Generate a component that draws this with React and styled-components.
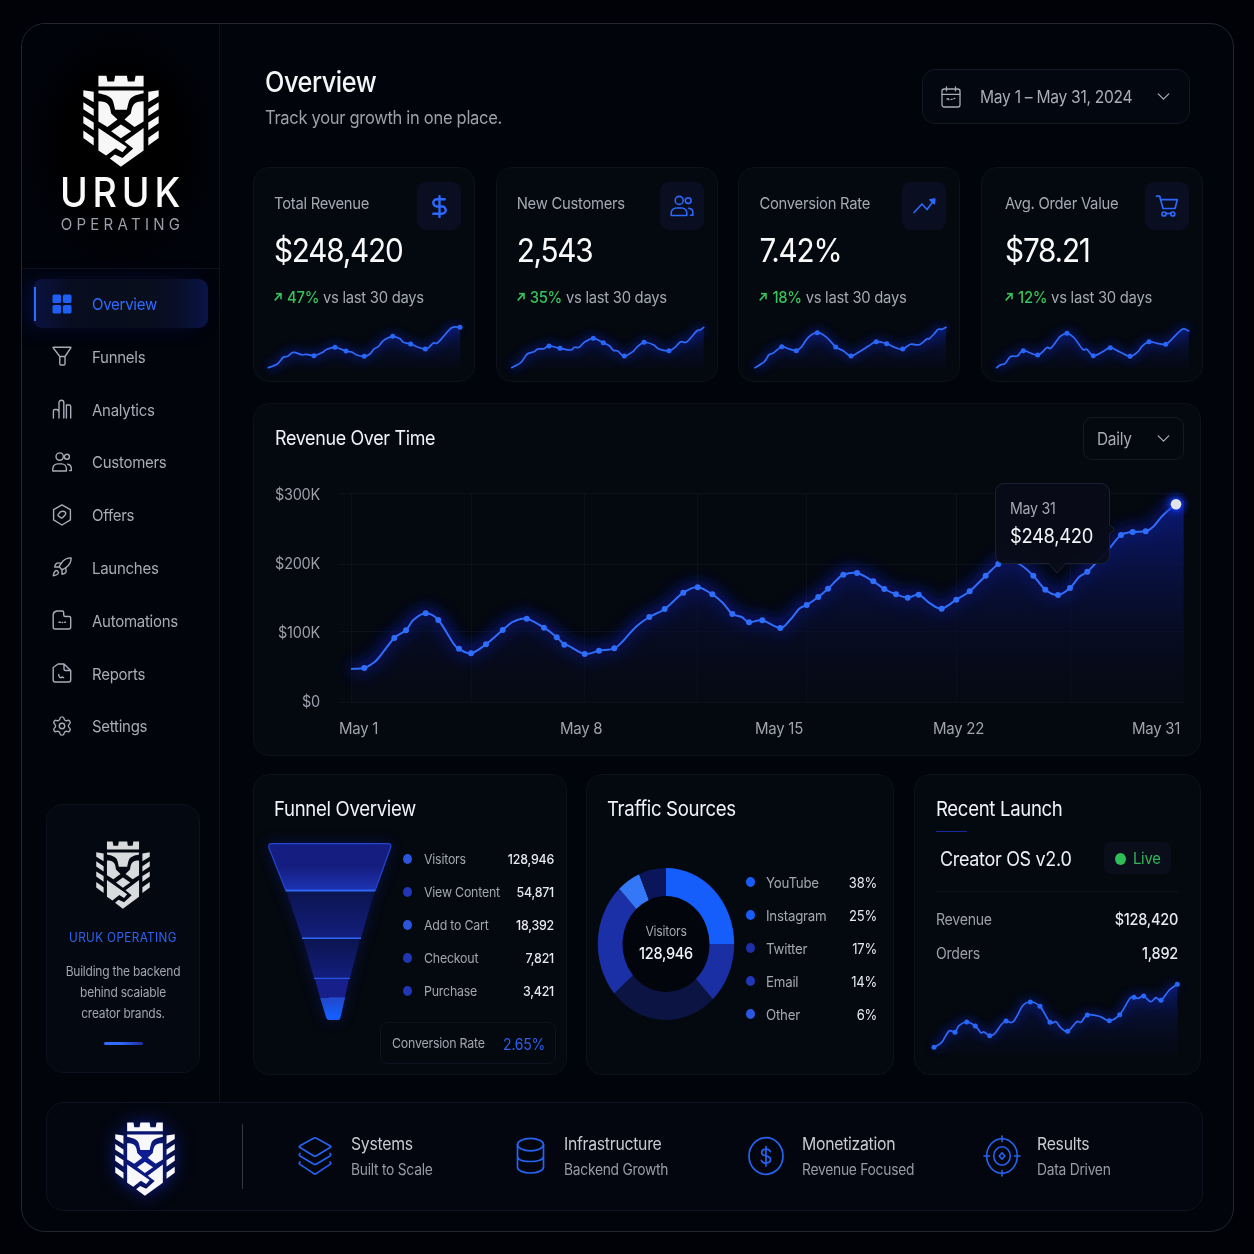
import styled, { createGlobalStyle, css } from "styled-components";
import { ChevronDown, DollarSign, Rocket, Settings } from "lucide-react";

const navItems = [
  { label: "Overview", icon: GridIcon, active: true },
  { label: "Funnels", icon: FunnelIcon },
  { label: "Analytics", icon: BarsIcon },
  { label: "Customers", icon: UsersIcon },
  { label: "Offers", icon: HexIcon },
  { label: "Launches", icon: RocketIcon },
  { label: "Automations", icon: FolderIcon },
  { label: "Reports", icon: FileIcon },
  { label: "Settings", icon: GearIcon },
];

// Points are [x, y] or [x, y, 1] when the point carries a dot.
const stats = [
  {
    label: "Total Revenue",
    value: "$248,420",
    change: "47%",
    icon: DollarIcon,
    inset: 20,
    points: [
      [14.3, 48.7], [23.3, 45], [29.3, 38.3], [33.7, 37.3], [39.3, 33.3],
      [47.7, 35.7], [52.7, 35.3], [60, 36.7, 1], [68.7, 33.3], [72, 30.7],
      [81, 28.3, 1], [92, 32, 1], [97.7, 33], [102.7, 36], [110.3, 37.3, 1],
      [116, 35], [120, 30], [124.3, 27.7], [127.7, 23.3], [131.7, 20],
      [138.7, 17.3, 1], [146, 19.7], [149.3, 23.3], [156.7, 25, 1],
      [162.7, 27.7], [171.3, 30, 1], [175, 28.3], [179.3, 24], [183.3, 24],
      [189.3, 17.7], [197.7, 8.7], [206, 8.3, 1],
    ],
  },
  {
    label: "New Customers",
    value: "2,543",
    change: "35%",
    icon: TeamIcon,
    inset: 20,
    points: [
      [14.7, 48.7], [24, 43.3], [30.3, 35], [37, 32.7], [40.7, 30], [47, 29.7],
      [52, 27, 1], [63, 29.3, 1], [74, 31], [77.3, 28.3], [82.3, 28.3],
      [87.3, 23.3], [96.3, 19.3, 1], [106.3, 23.7, 1], [112.3, 26.7],
      [116.3, 31.3], [120.7, 32], [127.3, 37, 1], [136.3, 32.3],
      [139.7, 28.3], [147, 23.3, 1], [156.3, 25.7], [162, 30],
      [172, 31.7, 1], [178, 28.3], [183.7, 22.7], [189.7, 23], [199.7, 12],
      [203, 11], [206.7, 8.3],
    ],
  },
  {
    label: "Conversion Rate",
    value: "7.42%",
    change: "18%",
    icon: TrendIcon,
    inset: 20,
    points: [
      [16, 48.7], [25.3, 42.7], [30, 35.7], [34.3, 34], [42.7, 27.7, 1],
      [49.3, 29.7], [57.3, 31.7, 1], [62.7, 27.7], [69.3, 18.3],
      [78.3, 13.7, 1], [87.7, 18.3], [96.7, 28, 1], [104.3, 31.7],
      [112, 37, 1], [122, 31.7], [130, 26.7], [137.3, 22.7, 1],
      [147.7, 24.7, 1], [156.7, 28.7], [163.7, 30, 1], [171.7, 25.3],
      [180.3, 25.7], [187.7, 20], [190.3, 19.7], [195, 15], [199.3, 10.3],
      [202.7, 10.3], [207, 8.3],
    ],
  },
  {
    label: "Avg. Order Value",
    value: "$78.21",
    change: "12%",
    icon: CartIcon,
    inset: 23,
    points: [
      [14.7, 48.7], [18.7, 45.7], [23, 44.7], [28.3, 37.7], [35.3, 37],
      [41.3, 31.7, 1], [55.7, 36, 1], [64.7, 28.7], [69, 29], [78, 17.7],
      [85, 14.3, 1], [92.3, 19], [100.7, 30.3], [104.7, 30.3],
      [111.3, 36.7, 1], [120.7, 32.7], [128.3, 28.7, 1], [138, 33],
      [148, 37.3, 1], [156.3, 32.3], [159.7, 27.7], [167, 22.7, 1],
      [175.3, 24.3], [183.7, 25.3, 1], [189.7, 20.3], [200.3, 10.3],
      [206.7, 12],
    ],
  },
];

const revenuePoints = [
  [12, 189], [25.3, 188, 1], [32.7, 184], [38.7, 179], [55.3, 158, 1],
  [67, 150.3, 1], [74.3, 140], [86.7, 133.3, 1], [99.3, 140, 1],
  [114.3, 163.3], [120, 168.7, 1], [132, 173.3, 1], [147, 164.3, 1],
  [163.7, 150, 1], [174.3, 141.7], [187.7, 138.7, 1], [205, 147.7, 1],
  [217.7, 157.3, 1], [225.3, 164.7, 1], [229.3, 165.7], [245.7, 174, 1],
  [260, 170.7, 1], [275.3, 168.3, 1], [284.3, 160.7], [297, 146.7],
  [310.3, 137, 1], [325.7, 129, 1], [344.3, 112.7, 1], [358.7, 107.3, 1],
  [373.3, 114.3, 1], [383.7, 122.7], [393.3, 134, 1], [402.7, 137],
  [410, 142.3, 1], [423.3, 140.3, 1], [441.3, 148, 1], [451, 140],
  [460.3, 128.7], [467.7, 125, 1], [479.3, 117, 1], [489, 108.7, 1],
  [497.7, 100], [504.3, 94.7, 1], [518, 93, 1], [534.3, 101.3, 1],
  [545.3, 109, 1], [557, 114.3, 1], [568.7, 117.7, 1], [579.7, 114.7, 1],
  [591, 123.3], [602.7, 128.7, 1], [617.3, 119.7, 1], [630.7, 111.3, 1],
  [646.7, 95.7, 1], [659.3, 84, 1], [668, 80.7], [680.3, 84],
  [694.3, 95.7, 1], [706.3, 109.7, 1], [719, 115, 1], [731, 108, 1],
  [740, 97], [748.3, 91.7, 1], [756.7, 83.3], [764.3, 76], [771, 67.7],
  [782, 55, 1], [793.7, 52, 1], [806.7, 51.3, 1], [814.3, 46.7],
  [822, 37.3], [827.7, 31.7], [837, 24.3],
];

const launchPoints = [
  [19, 72.3, 1], [26.7, 67.3], [34, 56], [40, 57.3, 1], [44, 50.7],
  [51.7, 47, 1], [60.3, 51, 1], [66, 57.7], [69, 57], [74.7, 60.7, 1],
  [80, 58.3], [86, 50], [91, 46, 1], [98.3, 46.7], [107.7, 30.7],
  [115.3, 27, 1], [125, 31.3, 1], [135, 47.3, 1], [141, 46.7],
  [145.7, 52.7], [152.7, 56.3, 1], [161.7, 46.7], [166, 47.3],
  [172.3, 40, 1], [184.3, 41.3], [194.3, 45.7, 1], [204.7, 39.7, 1],
  [215, 23.3], [219, 22.3, 1], [223.3, 23.3], [228.7, 21, 1],
  [235.7, 26.7], [241, 22.7], [246, 25.3, 1], [254.3, 15],
  [262.3, 9.3, 1],
];

const funnelRows = [
  { label: "Visitors", value: "128,946", color: "#2a55dc" },
  { label: "View Content", value: "54,871", color: "#2036b4" },
  { label: "Add to Cart", value: "18,392", color: "#2a55dc" },
  { label: "Checkout", value: "7,821", color: "#2036b4" },
  { label: "Purchase", value: "3,421", color: "#2036b4" },
];

const trafficRows = [
  { label: "YouTube", value: "38%", color: "#155dfc" },
  { label: "Instagram", value: "25%", color: "#155dfc" },
  { label: "Twitter", value: "17%", color: "#1e30a8" },
  { label: "Email", value: "14%", color: "#2038b8" },
  { label: "Other", value: "6%", color: "#2a58e0" },
];

// Clockwise from twelve o'clock, in degrees.
const slices = [
  { from: 0, to: 90, color: "#155efc" },
  { from: 90, to: 136.7, color: "#1b2fa4" },
  { from: 136.7, to: 229.4, color: "#0b1442" },
  { from: 229.4, to: 316.7, color: "#1b2fa6" },
  { from: 316.7, to: 336.8, color: "#3578f7" },
  { from: 336.8, to: 360, color: "#0b155a" },
];

const pillars = [
  { title: "Systems", text: "Built to Scale", icon: LayersIcon, gap: 53 },
  { title: "Infrastructure", text: "Backend Growth", icon: DatabaseIcon, gap: 50 },
  { title: "Monetization", text: "Revenue Focused", icon: CoinIcon, gap: 54 },
  { title: "Results", text: "Data Driven", icon: TargetIcon, gap: 54 },
];

function linePath(points) {
  return points
    .map(([x, y], i) => {
      if (i === 0) return `M${x} ${y}`;
      const before = points[i - 2] || points[i - 1];
      const start = points[i - 1];
      const after = points[i + 1] || points[i];
      const c1 = [start[0] + (x - before[0]) / 6, start[1] + (y - before[1]) / 6];
      const c2 = [x - (after[0] - start[0]) / 6, y - (after[1] - start[1]) / 6];
      return `C${c1.map((n) => n.toFixed(1))} ${c2.map((n) => n.toFixed(1))} ${x} ${y}`;
    })
    .join("");
}

function slicePath({ from, to }) {
  const at = (deg, rx, ry) => {
    const a = (deg * Math.PI) / 180;
    return `${(69 + rx * Math.sin(a)).toFixed(2)} ${(77 - ry * Math.cos(a)).toFixed(2)}`;
  };
  return `M${at(from, 68.2, 76)}A68.2 76 0 0 1 ${at(to, 68.2, 76)}L${at(to, 43.5, 48)}A43.5 48 0 0 0 ${at(from, 43.5, 48)}Z`;
}

export default function App() {
  return (
    <>
      <GlobalStyle />
      <Page>
        <Frame>
          <Body>
            <Sidebar>
              <Brand>
                <LionLogo width={76} height={92} fill="#f7f7f8" />
                <BrandName>URUK</BrandName>
                <BrandSub>OPERATING</BrandSub>
              </Brand>
              <Nav>
                {navItems.map(({ label, icon: Icon, active }) => (
                  <NavItem key={label} $active={active}>
                    <NavIcon>
                      <Icon />
                    </NavIcon>
                    <NavLabel>{label}</NavLabel>
                  </NavItem>
                ))}
              </Nav>
              <PromoCard>
                <LionLogo width={54} height={68} fill="#d9dadd" />
                <PromoName>URUK OPERATING</PromoName>
                <PromoText>
                  Building the backend
                  <br />
                  behind scaiable
                  <br />
                  creator brands.
                </PromoText>
                <PromoBar />
              </PromoCard>
            </Sidebar>
            <Main>
              <Header>
                <div>
                  <Title>Overview</Title>
                  <Subtitle>Track your growth in one place.</Subtitle>
                </div>
                <DateButton>
                  <CalendarIcon />
                  <DateText>May 1 – May 31, 2024</DateText>
                  <ChevronDown size={21} strokeWidth={1.5} />
                </DateButton>
              </Header>
              <StatGrid>
                {stats.map((stat) => (
                  <StatCard key={stat.label} {...stat} />
                ))}
              </StatGrid>
              <RevenueCard />
              <BottomGrid>
                <FunnelCard />
                <TrafficCard />
                <LaunchCard />
              </BottomGrid>
            </Main>
          </Body>
          <Footer>
            <FooterLogo>
              <LionLogo width={60} height={74} fill="#f8f8fa" />
            </FooterLogo>
            <FooterDivider />
            <Pillars>
              {pillars.map(({ title, text, icon: Icon, gap }) => (
                <Pillar key={title} $gap={gap}>
                  <Icon />
                  <div>
                    <PillarTitle>{title}</PillarTitle>
                    <PillarText>{text}</PillarText>
                  </div>
                </Pillar>
              ))}
            </Pillars>
          </Footer>
        </Frame>
      </Page>
    </>
  );
}

function StatCard({ label, value, change, icon: Icon, inset, points }) {
  return (
    <Card>
      <StatHead $inset={inset}>
        <StatLabel>{label}</StatLabel>
        <IconTile>
          <Icon />
        </IconTile>
      </StatHead>
      <StatValue $inset={inset}>{value}</StatValue>
      <StatChange $inset={inset}>
        <ArrowIcon />
        <strong>{change}</strong> vs last 30 days
      </StatChange>
      <SparkWrapper>
        <Trend
          id={label.replace(/\W/g, "")}
          width={220}
          height={61}
          base={50}
          right={206.7}
          points={points}
        />
      </SparkWrapper>
    </Card>
  );
}

function Trend({ id, width, height, base, right, points }) {
  const line = linePath(points);
  const first = points[0];
  return (
    <Chart width={width} height={height} viewBox={`0 0 ${width} ${height}`}>
      <defs>
        <linearGradient id={id} x1="0" y1="0" x2="0" y2="1">
          <stop offset="0" stopColor="#0c1d80" stopOpacity="0.8" />
          <stop offset="0.5" stopColor="#0a1550" stopOpacity="0.4" />
          <stop offset="1" stopColor="#0a1130" stopOpacity="0.15" />
        </linearGradient>
        <filter id={`${id}Glow`} x="-10%" y="-50%" width="120%" height="200%">
          <feGaussianBlur stdDeviation="5" />
        </filter>
      </defs>
      <path
        d={line}
        fill="none"
        stroke="#0b22b8"
        strokeWidth="8"
        opacity="0.45"
        filter={`url(#${id}Glow)`}
      />
      <path d={`${line}L${right} ${base}H${first[0]}Z`} fill={`url(#${id})`} />
      <path
        d={line}
        fill="none"
        stroke="#2f6bfa"
        strokeWidth="1.7"
        strokeLinecap="round"
      />
      {points
        .filter(([, , dot]) => dot)
        .map(([x, y]) => (
          <circle key={x} cx={x} cy={y} r="2.5" fill="#2767fb" />
        ))}
    </Chart>
  );
}

function RevenueCard() {
  const line = linePath(revenuePoints);
  return (
    <RevenueSection>
      <RevenueHead>
        <RevenueTitle>Revenue Over Time</RevenueTitle>
        <PeriodButton>
          <span>Daily</span>
          <ChevronDown size={21} strokeWidth={1.5} />
        </PeriodButton>
      </RevenueHead>
      <RevenueBody>
        <YLabels>
          <span>$300K</span>
          <span>$200K</span>
          <span>$100K</span>
          <span>$0</span>
        </YLabels>
        <Plot>
          <Chart width="861" height="232" viewBox="0 0 861 232" overflow="visible">
            <defs>
              <linearGradient id="area" gradientUnits="userSpaceOnUse" x1="0" y1="20" x2="0" y2="222">
                <stop offset="0" stopColor="#0b1a7a" stopOpacity="0.95" />
                <stop offset="0.3" stopColor="#0a1458" stopOpacity="0.75" />
                <stop offset="0.65" stopColor="#090f36" stopOpacity="0.5" />
                <stop offset="1" stopColor="#090e1c" stopOpacity="0.3" />
              </linearGradient>
              <filter id="areaGlow" x="-5%" y="-20%" width="110%" height="140%">
                <feGaussianBlur stdDeviation="7" />
              </filter>
              <radialGradient id="endGlow">
                <stop offset="0.3" stopColor="#1040ff" stopOpacity="0.85" />
                <stop offset="0.6" stopColor="#0c2ad0" stopOpacity="0.35" />
                <stop offset="1" stopColor="#0a1a90" stopOpacity="0" />
              </radialGradient>
            </defs>
            <path
              d="M0 13.5H845M0 84.5H845M0 151.5H845M0 222.5H845M12.5 13V222M132.5 13V222M245.5 13V222M358.5 13V222M467.5 13V222M617.5 13V222M731.5 13V222"
              stroke="#0b101b"
              fill="none"
            />
            <path
              d={line}
              fill="none"
              stroke="#0a1fc4"
              strokeWidth="14"
              opacity="0.48"
              filter="url(#areaGlow)"
            />
            <path d={`${line}L844.7 20V222H12Z`} fill="url(#area)" />
            <path d={line} fill="none" stroke="#2f6dfb" strokeWidth="2" />
            {revenuePoints
              .filter(([, , dot]) => dot)
              .map(([x, y]) => (
                <circle key={x} cx={x} cy={y} r="3" fill="#2f6dfb" />
              ))}
            <circle cx="837" cy="24.3" r="15" fill="url(#endGlow)" />
            <circle cx="837" cy="24.3" r="5.3" fill="#e3e4ea" />
          </Chart>
          <Tooltip>
            <TooltipDate>May 31</TooltipDate>
            <TooltipValue>$248,420</TooltipValue>
            <TooltipDown width="18" height="11" viewBox="0 0 18 11">
              <path d="M0 0L9 10L18 0" fill="#080c18" stroke="#1d2334" />
            </TooltipDown>
            <TooltipSide width="7" height="12" viewBox="0 0 7 12">
              <path d="M0 0L6 6L0 10" fill="#070c1a" stroke="#1d2334" />
            </TooltipSide>
          </Tooltip>
        </Plot>
      </RevenueBody>
      <XLabels>
        <span>May 1</span>
        <span>May 8</span>
        <span>May 15</span>
        <span>May 22</span>
        <span>May 31</span>
      </XLabels>
    </RevenueSection>
  );
}

function FunnelCard() {
  return (
    <Card>
      <CardTitle>Funnel Overview</CardTitle>
      <FunnelBody>
        <FunnelChart />
        <FunnelSide>
          {funnelRows.map(({ label, value, color }) => (
            <LegendRow key={label} $gap={12}>
              <Dot $color={color} />
              <LegendLabel>{label}</LegendLabel>
              <LegendValue $strong>{value}</LegendValue>
            </LegendRow>
          ))}
        </FunnelSide>
      </FunnelBody>
      <RateBox>
        <RateLabel>Conversion Rate</RateLabel>
        <RateValue>2.65%</RateValue>
      </RateBox>
    </Card>
  );
}

function TrafficCard() {
  return (
    <Card>
      <CardTitle>Traffic Sources</CardTitle>
      <TrafficBody>
        <Donut>
          <svg width="138" height="154" viewBox="0 0 138 154">
            <ellipse cx="69" cy="77" rx="46" ry="50" fill="#02050b" />
            {slices.map((slice) => (
              <path key={slice.from} d={slicePath(slice)} fill={slice.color} />
            ))}
          </svg>
          <DonutText>
            <DonutLabel>Visitors</DonutLabel>
            <DonutValue>128,946</DonutValue>
          </DonutText>
        </Donut>
        <TrafficLegend>
          {trafficRows.map(({ label, value, color }) => (
            <LegendRow key={label} $gap={11}>
              <Dot $color={color} />
              <LegendLabel $large>{label}</LegendLabel>
              <LegendValue>{value}</LegendValue>
            </LegendRow>
          ))}
        </TrafficLegend>
      </TrafficBody>
    </Card>
  );
}

function LaunchCard() {
  return (
    <Card>
      <CardTitle $inset={21}>Recent Launch</CardTitle>
      <LaunchAccent />
      <LaunchHead>
        <LaunchName>Creator OS v2.0</LaunchName>
        <LiveBadge>
          <span>Live</span>
        </LiveBadge>
      </LaunchHead>
      <LaunchRows>
        <LaunchRow>
          <span>Revenue</span>
          <strong>$128,420</strong>
        </LaunchRow>
        <LaunchRow>
          <span>Orders</span>
          <strong>1,892</strong>
        </LaunchRow>
      </LaunchRows>
      <Trend
        id="launch"
        width={285}
        height={99}
        base={79}
        right={263}
        points={launchPoints}
      />
    </Card>
  );
}

/* ---------- drawings ---------- */

function LionLogo({ width, height, fill }) {
  const strips = "M1 45L32 50V81L1 63ZM1 81L32 101V122L1 102ZM1 122L32 141V164L1 143ZM1 165L32 186V209L1 187Z";
  return (
    <svg
      width={width}
      height={height}
      viewBox="0 0 227 273"
      preserveAspectRatio="none"
      fill={fill}
    >
      <path d="M46 2H70L73 19H93L96 2H131L134 19H154L157 2H181V34H46Z" />
      <path d="M46 46H181V54C160 58 144 64 139 74C135 82 134 92 131 103H96C93 92 92 82 88 74C83 64 67 58 46 54Z" />
      <path d="M46 78C60 78 70 80 76 88C82 96 82 104 84 114L103 132L73 154L46 138Z" />
      <path d="M181 78C167 78 157 80 151 88C145 96 145 104 143 114L124 132L154 154L181 138Z" />
      <path d="M113 147L144 167L113 188L84 167Z" />
      <path d="M46 157L131 214L118 229L98 217L69 239L46 224Z" />
      <path d="M181 157V224L113 272L80 248L95 236L118 246L150 218L124 198Z" />
      <path d={strips} />
      <path d={strips} transform="translate(227) scale(-1 1)" />
    </svg>
  );
}

function FunnelChart() {
  return (
    <FunnelSvg width="126" height="182" viewBox="0 0 126 182">
      <defs>
        <linearGradient id="tier1" x1="0" y1="0" x2="0" y2="1">
          <stop offset="0.5" stopColor="#151e80" />
          <stop offset="1" stopColor="#1d33b4" />
        </linearGradient>
        <linearGradient id="tier2" x1="0" y1="0" x2="0" y2="1">
          <stop offset="0" stopColor="#0b154f" />
          <stop offset="1" stopColor="#131e7e" />
        </linearGradient>
        <linearGradient id="tier5" x1="0" y1="0" x2="0" y2="1">
          <stop offset="0" stopColor="#2247c8" />
          <stop offset="0.8" stopColor="#155efc" />
        </linearGradient>
      </defs>
      <path
        d="M4.5 2.7H121Q125 2.7 123.6 6.5L108.3 49.2H18.7L2 7Q.8 2.7 4.5 2.7Z"
        fill="url(#tier1)"
        stroke="#2445cf"
        strokeWidth="1.2"
      />
      <path d="M19.3 50H107.7L94 97H35Z" fill="url(#tier2)" />
      <path d="M36 98H93L83 137H47Z" fill="url(#tier2)" />
      <path d="M48 138H82L77.8 157H53.2Z" fill="#161f8a" />
      <path d="M53.2 157H78L73.5 176.5Q73 179 71 179H62Q60 179 59.3 177Z" fill="url(#tier5)" />
      <path d="M18.7 49.6H108.3M35 97.3H94" stroke="#2f68f6" strokeWidth="1.6" />
      <path d="M47 137.3H83M62 157H78" stroke="#2753e0" strokeWidth="1.2" />
    </FunnelSvg>
  );
}

function Glyph({ size = 20, height, strokeWidth = 1.4, children, box = 20 }) {
  return (
    <svg
      width={size}
      height={height || size}
      viewBox={`0 0 ${box} ${height ? (box * height) / size : box}`}
      fill="none"
      stroke="currentColor"
      strokeWidth={strokeWidth}
      strokeLinecap="round"
      strokeLinejoin="round"
    >
      {children}
    </svg>
  );
}

function GridIcon() {
  return (
    <svg width="20" height="20" viewBox="0 0 20 20" fill="#1f5ff5">
      <rect x="0.5" y="0.5" width="8.6" height="8.6" rx="1.6" />
      <rect x="10.9" y="0.5" width="8.6" height="8.6" rx="1.6" />
      <rect x="0.5" y="11" width="8.6" height="8.6" rx="1.6" />
      <rect x="10.9" y="11" width="8.6" height="8.6" rx="1.6" />
    </svg>
  );
}

function FunnelIcon() {
  return (
    <Glyph>
      <path d="M1.5 1.2h17q.7 0 .3.6L13 10.5v7.3q0 1.2-1.2 1.2H9q-1.2 0-1.2-1.2v-7.3L1.2 1.8q-.4-.6.3-.6ZM7.8 10.5H13" />
    </Glyph>
  );
}

function BarsIcon() {
  return (
    <Glyph>
      <path d="M1.4 19v-7q0-1.5 1.5-1.5h1.8q1.5 0 1.5 1.5M7 19V3.6a2.4 2.4 0 0 1 4.8 0V19M14.4 19V6h2.8q1.5 0 1.5 1.5V19" />
    </Glyph>
  );
}

function UsersIcon({ size = 20, strokeWidth = 1.4 }) {
  return (
    <Glyph size={size} strokeWidth={strokeWidth}>
      <circle cx="7.7" cy="4.6" r="3.7" />
      <circle cx="14.9" cy="4.8" r="2.5" />
      <path d="M.8 19v-2.3a4.8 4.8 0 0 1 4.8-4.8h4a4.8 4.8 0 0 1 4.8 4.8V19zM15.7 12.2q3.6.5 3.6 4.2v2.2h-1.8" />
    </Glyph>
  );
}

function TeamIcon() {
  return (
    <Glyph size={24} height={22} box={24} strokeWidth={1.6}>
      <circle cx="9.2" cy="5.4" r="4" />
      <circle cx="18.2" cy="5.6" r="2.9" />
      <path d="M1.2 20.5V18a5 5 0 0 1 5-5h5.600a5 5 0 0 1 5 5v2.500zM18.700 13.300q4.200.5 4.200 4.500v2.500h-2.400" />
    </Glyph>
  );
}

function HexIcon() {
  return (
    <Glyph size={20} height={22}>
      <path d="M10 .9l8.4 4.8v10.2L10 21l-8.4-5.1V5.7Z" />
      <path d="M6.2 10.6l2.2-2.8q3-1.3 5 .4.8 1.2 0 2.3l-2.6 3q-.9.9-2 .1l-2.3-1.5q-.8-.7-.3-1.5Z" />
    </Glyph>
  );
}

function RocketIcon() {
  return <Rocket size={22} strokeWidth={1.5} />;
}

function FolderIcon() {
  return (
    <Glyph>
      <path d="M5 1h5.2q1.5 0 1.5 1.5V5q0 1.5 1.5 1.5h4q1.5 0 1.5 1.5v9q0 2-2 2H3.2q-2 0-2-2V4.5Q1.5 1.5 5 1ZM7 12.3h1.5M10.2 12.5h.5M12.6 12.2h.8" />
    </Glyph>
  );
}

function FileIcon() {
  return (
    <Glyph>
      <path d="M12 1H6L1.2 4.5V17q0 2 2 2h13.5q2 0 2-2V7.5ZM12 1v5q0 1.5 1.5 1.5h5.2M6.8 11.5v1.3q.5 2 2.3 1.9l.9-.7 1.6.7" />
    </Glyph>
  );
}

function GearIcon() {
  return <Settings size={22} strokeWidth={1.5} />;
}

function CalendarIcon() {
  return (
    <Glyph size={20} height={22} strokeWidth={1.3}>
      <rect x="1" y="3" width="18" height="18" rx="2.2" />
      <path d="M1 8.3h18M5.5.8v4M14.5.8v4M6 13.2l1.2-.6.6 1.2M10 13.5l1.2-.4M13 12.7l.9-.3" />
    </Glyph>
  );
}

function DollarIcon() {
  return <DollarSign size={25} strokeWidth={2.3} />;
}

function TrendIcon() {
  return (
    <Glyph size={24} box={24} strokeWidth={1.7}>
      <path d="M2 18.5l8-8.5 5 5.5L21.500 7" />
      <path d="M18 5.800l4.800-.8-.4 4.700Z" fill="currentColor" />
    </Glyph>
  );
}

function CartIcon() {
  return (
    <Glyph size={24} box={24} strokeWidth={1.7}>
      <path d="M1.5 2.2h3.2l3.3 12.3h12l2.3-8.8H5.8" />
      <circle cx="9" cy="20" r="2" />
      <circle cx="17.8" cy="20" r="2" />
      <path d="M11 19l2 .8 2.8-.8" />
    </Glyph>
  );
}

function ArrowIcon() {
  return (
    <svg width="8" height="8" viewBox="0 0 8 8" fill="none" stroke="#35c45c" strokeWidth="1.6">
      <path d="M.7 7L6.2 1.7M2 1h5v5" />
    </svg>
  );
}

function LayersIcon() {
  return (
    <Glyph size={34} height={40} box={34} strokeWidth={1.7}>
      <path d="M15.5 2.2q1.5-.8 3 0L32 9.7q1.5.9 0 1.9L18.5 19.8q-1.5.9-3 0L2 11.6q-1.5-1 0-1.9Z" />
      <path d="M2 17.5q-1.5 1.2 0 2.4l13.5 8q1.5.9 3 0l13.5-8q1.5-1.2 0-2.4M2 26q-1.5 1.2 0 2.4l13.5 9q1.5.9 3 0l13.5-9q1.5-1.2 0-2.4" />
    </Glyph>
  );
}

function DatabaseIcon() {
  return (
    <Glyph size={34} height={40} box={34} strokeWidth={1.7}>
      <ellipse cx="16.5" cy="8.600" rx="13" ry="6.300" />
      <path d="M3.500 8.600v22.400c0 3.600 5.800 6 13 6s13-2.400 13-6V8.600M3.500 20.200c0 3.600 5.800 5.300 13 5.300s13-1.700 13-5.300" />
    </Glyph>
  );
}

function CoinIcon() {
  return (
    <Glyph size={36} height={40} box={36} strokeWidth={1.7}>
      <ellipse cx="18" cy="20" rx="17" ry="18.3" />
      <path d="M18 10.5v19.5M22.3 15.5q-1-2.4-4.3-2.4-4.3.2-4.3 3.3 0 2.600 4.300 3.500 4.600.9 4.600 3.900 0 3.200-4.600 3.300-3.600 0-4.600-2.600" />
    </Glyph>
  );
}

function TargetIcon() {
  return (
    <Glyph size={38} height={42} box={38} strokeWidth={1.6}>
      <ellipse cx="19" cy="21" rx="15.3" ry="17.2" />
      <ellipse cx="19" cy="21" rx="8.3" ry="9.3" />
      <path d="M19 17.8l2.8 3.2-2.8 3.2-2.8-3.2ZM19 1v5.5M19 35.5V41M1 21h5.5M31.5 21H37" />
    </Glyph>
  );
}

/* ---------- styles ---------- */

const GlobalStyle = createGlobalStyle`
  body {
    margin: 0;
    background: #010207;
    color: #f2f3f6;
    font-family: Inter, "Liberation Sans", sans-serif;
  }
  * {
    box-sizing: border-box;
  }
`;

// The interface type is slightly taller than Inter's natural proportions.
const tall = css`
  display: block;
  transform: scaleY(1.1);
  letter-spacing: -0.018em;
  white-space: nowrap;
`;

const Page = styled.div`
  width: 1254px;
  height: 1254px;
  padding: 23px 20px 22px 21px;
  overflow: hidden;
`;

const Frame = styled.div`
  display: flex;
  flex-direction: column;
  height: 1209px;
  border: 1px solid #23262f;
  border-radius: 24px;
  background: #01040b;
  overflow: hidden;
`;

const Body = styled.div`
  display: flex;
  height: 1078px;
`;

const Sidebar = styled.aside`
  width: 198px;
  border-right: 1px solid #0d111d;
`;

const Brand = styled.div`
  display: flex;
  flex-direction: column;
  align-items: center;
  height: 245px;
  padding-top: 51px;
  border-bottom: 1px solid #0d111d;
  background: radial-gradient(closest-side, #000001 60%, #01030a);
`;

const BrandName = styled.div`
  ${tall}
  margin-top: 8px;
  padding-left: 4px;
  font-size: 37.5px;
  line-height: 36px;
  letter-spacing: 4.9px;
  font-weight: 500;
  color: #fafafb;
`;

const BrandSub = styled.div`
  ${tall}
  margin-top: 3px;
  padding-left: 4px;
  font-size: 15px;
  line-height: 20px;
  letter-spacing: 4.3px;
  color: #9b9ea8;
`;

const Nav = styled.nav`
  display: flex;
  flex-direction: column;
  gap: 3.8px;
  padding: 10px 11px 0;
`;

const NavItem = styled.div`
  display: flex;
  align-items: center;
  height: 49px;
  padding-left: 18px;
  border-radius: 9px;
  color: #a9acb6;
  ${({ $active }) =>
    $active &&
    css`
      color: #2f6bff;
      background:
        linear-gradient(#2f6bff, #2f6bff) 1px 8px / 2px 34px no-repeat,
        linear-gradient(90deg, #0a1240, #080d20 22%, #090e1c 60%, #080e26 82%, #0a1448);
      box-shadow: -10px 0 20px rgba(10, 28, 130, 0.3);
    `}
`;

const NavIcon = styled.span`
  display: flex;
  align-items: center;
  justify-content: center;
  width: 22px;
  margin-right: 19px;
`;

const NavLabel = styled.span`
  ${tall}
  font-size: 15px;
`;

const PromoCard = styled.div`
  display: flex;
  flex-direction: column;
  align-items: center;
  width: 154px;
  height: 269px;
  margin: 53.6px 0 0 24px;
  padding-top: 36px;
  border: 1px solid #0c111d;
  border-radius: 17px;
  background: #040810;
`;

const PromoName = styled.div`
  ${tall}
  margin-top: 19px;
  font-size: 11.7px;
  line-height: 20px;
  letter-spacing: 0.4px;
  color: #2c64f4;
`;

const PromoText = styled.p`
  margin: 13px 0 0;
  font-size: 12px;
  line-height: 19px;
  letter-spacing: -0.018em;
  text-align: center;
  white-space: nowrap;
  color: #a2a5af;
  transform: scaleY(1.1);
  transform-origin: 50% 0;
`;

const PromoBar = styled.div`
  width: 39px;
  height: 3px;
  margin-top: 24px;
  border-radius: 2px;
  background: linear-gradient(90deg, #2f6bff 40%, #1c2ea4);
`;

const Main = styled.main`
  width: 981px;
  padding: 0 0 0 33px;
`;

const Header = styled.header`
  display: flex;
  justify-content: space-between;
  width: 980px;
  height: 143px;
  padding: 42px 43px 0 12px;
`;

const Title = styled.h1`
  ${tall}
  margin: 0;
  font-size: 25.3px;
  line-height: 32px;
  font-weight: 500;
  color: #f5f6f8;
`;

const Subtitle = styled.div`
  ${tall}
  margin-top: 8px;
  font-size: 16.5px;
  line-height: 22px;
  color: #9da0ab;
`;

const DateButton = styled.div`
  display: flex;
  align-items: center;
  width: 268px;
  height: 55px;
  margin-top: 3px;
  padding: 0 15px 0 18px;
  border: 1px solid #131823;
  border-radius: 13px;
  background: #03070f;
  color: #a9acb6;
`;

const DateText = styled.span`
  ${tall}
  flex: 1;
  margin-left: 19px;
  font-size: 15.6px;
`;

const Card = styled.section`
  border: 1px solid #0c111c;
  border-radius: 16px;
  background: #04080f;
`;

const StatGrid = styled.div`
  display: grid;
  grid-template-columns: repeat(4, 222px);
  gap: 20.7px;
  height: 215px;
`;

const StatHead = styled.div`
  display: flex;
  justify-content: space-between;
  padding: 14px 13px 0 ${({ $inset }) => $inset}px;
`;

const StatLabel = styled.div`
  ${tall}
  margin-top: 12px;
  font-size: 14.8px;
  line-height: 20px;
  color: #a6a9b3;
`;

const IconTile = styled.div`
  display: flex;
  align-items: center;
  justify-content: center;
  width: 44px;
  height: 48px;
  border-radius: 9px;
  background: #090e20;
  color: #2c68fb;
`;

const StatValue = styled.div`
  ${tall}
  padding-left: ${({ $inset }) => $inset}px;
  font-size: 29.7px;
  line-height: 40px;
  letter-spacing: -1.2px;
  color: #fafafb;
`;

const StatChange = styled.div`
  ${tall}
  padding-left: ${({ $inset }) => $inset}px;
  margin-top: 17px;
  font-size: 14.8px;
  line-height: 20px;
  color: #a6a9b3;

  svg {
    margin-right: 5px;
    vertical-align: 1px;
  }

  strong {
    font-weight: 500;
    color: #35c45c;
  }
`;

const SparkWrapper = styled.div`
  margin-top: 12px;
`;

const Chart = styled.svg`
  display: block;
`;

const RevenueSection = styled(Card)`
  width: 948px;
  height: 353px;
  margin-top: 21px;
`;

const RevenueHead = styled.div`
  display: flex;
  justify-content: space-between;
  height: 76px;
  padding: 13px 16px 0 21px;
`;

const RevenueTitle = styled.h2`
  ${tall}
  margin: 11px 0 0;
  font-size: 17.9px;
  line-height: 24px;
  font-weight: 400;
  color: #f2f3f6;
`;

const PeriodButton = styled.div`
  display: flex;
  align-items: center;
  justify-content: space-between;
  width: 101px;
  height: 43px;
  padding: 0 9px 0 13px;
  border: 1px solid #141924;
  border-radius: 9px;
  color: #a9acb6;

  span {
    ${tall}
    font-size: 15.4px;
  }
`;

const RevenueBody = styled.div`
  display: flex;
`;

const YLabels = styled.div`
  display: flex;
  flex-direction: column;
  gap: 49px;
  width: 66px;
  margin-right: 19px;
  padding-top: 4px;
  text-align: right;

  span {
    ${tall}
    font-size: 14.5px;
    line-height: 20px;
    color: #9da0ab;
  }
`;

const Plot = styled.div`
  position: relative;
`;

const Tooltip = styled.div`
  position: absolute;
  left: 656px;
  top: 3px;
  width: 115px;
  height: 81px;
  padding: 14px 0 0 14px;
  border: 1px solid #1a2030;
  border-radius: 9px;
  background: rgba(8, 12, 24, 0.95);
`;

const TooltipDate = styled.div`
  ${tall}
  font-size: 14.2px;
  line-height: 20px;
  color: #a6a9b3;
`;

const TooltipValue = styled.div`
  ${tall}
  margin-top: 5px;
  font-size: 18.4px;
  line-height: 24px;
  color: #f2f3f6;
`;

const TooltipDown = styled.svg`
  position: absolute;
  left: 52px;
  top: 79px;
`;

const TooltipSide = styled.svg`
  position: absolute;
  left: 113px;
  top: 40px;
`;

const XLabels = styled.div`
  display: grid;
  grid-template-columns: 221px 195px 178px 199px auto;
  padding: 6px 0 0 85px;

  span {
    ${tall}
    font-size: 15px;
    line-height: 20px;
    color: #a0a3ad;
  }
`;

const BottomGrid = styled.div`
  display: grid;
  grid-template-columns: 314px 308px 288px;
  gap: 19px;
  height: 301px;
  margin-top: 18px;

  & > :last-child {
    margin-left: 1px;
  }
`;

const CardTitle = styled.h2`
  ${tall}
  margin: 21px 0 0 ${({ $inset }) => $inset || 20}px;
  font-size: 18.6px;
  line-height: 24px;
  font-weight: 400;
  color: #f2f3f6;
`;

const FunnelBody = styled.div`
  display: flex;
  height: 201px;
`;

const FunnelSvg = styled.svg`
  margin: 21px 0 0 13px;
  filter: drop-shadow(0 0 7px rgba(20, 40, 170, 0.35));
`;

const FunnelSide = styled.div`
  width: 151px;
  margin: 23px 0 0 10px;
`;

const LegendRow = styled.div`
  display: flex;
  align-items: center;
  gap: ${({ $gap }) => $gap}px;
  height: 32.9px;
`;

const Dot = styled.span`
  width: 9px;
  height: 10px;
  border-radius: 50%;
  background: ${({ $color }) => $color};
`;

const LegendLabel = styled.span`
  ${tall}
  flex: 1;
  font-size: ${({ $large }) => ($large ? "13.3px" : "12.4px")};
  color: #a3a6b0;
`;

const LegendValue = styled.span`
  ${tall}
  font-size: ${({ $strong }) => ($strong ? "12.4px" : "13px")};
  font-weight: ${({ $strong }) => ($strong ? 500 : 400)};
  color: #e8e9ee;
`;

const RateBox = styled.div`
  display: flex;
  align-items: center;
  justify-content: space-between;
  width: 176px;
  height: 42px;
  margin: 1px 0 0 126px;
  padding: 1px 10px 0 11px;
  border: 1px solid #0d121e;
  border-radius: 8px;
`;

const RateLabel = styled.span`
  ${tall}
  font-size: 12.4px;
  color: #a3a6b0;
`;

const RateValue = styled.span`
  ${tall}
  font-size: 14px;
  color: #2c60f2;
`;

const TrafficBody = styled.div`
  display: flex;
`;

const Donut = styled.div`
  position: relative;
  width: 138px;
  height: 154px;
  margin: 47px 0 0 10px;
`;

const DonutText = styled.div`
  position: absolute;
  inset: 55px 0 auto;
  text-align: center;
`;

const DonutLabel = styled.div`
  ${tall}
  font-size: 12.2px;
  line-height: 20px;
  color: #a3a6b0;
`;

const DonutValue = styled.div`
  ${tall}
  margin-top: 1px;
  font-size: 14.5px;
  line-height: 20px;
  font-weight: 500;
  color: #f2f3f6;
`;

const TrafficLegend = styled.div`
  width: 131px;
  margin: 46px 0 0 11px;
`;

const LaunchAccent = styled.div`
  width: 31px;
  height: 1px;
  margin: 11px 0 0 21px;
  background: #1526a0;
`;

const LaunchHead = styled.div`
  display: flex;
  justify-content: space-between;
  align-items: center;
  height: 60px;
  margin: 0 22px 0 21px;
  padding: 0 7px 7px 4px;
  border-bottom: 1px solid #0c1220;
`;

const LaunchName = styled.div`
  ${tall}
  font-size: 18px;
  color: #eeeff3;
`;

const LiveBadge = styled.div`
  display: flex;
  align-items: center;
  gap: 7px;
  width: 67px;
  height: 32px;
  padding: 1px 0 0 11px;
  border-radius: 7px;
  background: #090e1a;

  &::before {
    content: "";
    width: 11px;
    height: 12px;
    border-radius: 50%;
    background: #30bd58;
  }

  span {
    ${tall}
    font-size: 14.8px;
    color: #30b858;
  }
`;

const LaunchRows = styled.div`
  height: 83px;
  padding: 9px 22px 0 21px;
`;

const LaunchRow = styled.div`
  display: flex;
  justify-content: space-between;
  align-items: center;
  height: 34.5px;

  span {
    ${tall}
    font-size: 14.1px;
    color: #9da0ab;
  }

  strong {
    ${tall}
    font-size: 14.5px;
    font-weight: 500;
    color: #e8e9ee;
  }
`;

const Footer = styled.footer`
  display: flex;
  align-items: center;
  width: 1157px;
  height: 109px;
  margin-left: 24px;
  border: 1px solid #0f1420;
  border-radius: 18px;
  background: #03060e;
`;

const FooterLogo = styled.div`
  display: flex;
  justify-content: center;
  width: 195px;
  padding-top: 4px;
  background: radial-gradient(circle closest-side at 50% 50%, #0d1a78 10%, rgba(10, 20, 90, 0.5) 60%, transparent);

  svg {
    filter: drop-shadow(0 0 9px #0e1fa8);
  }
`;

const FooterDivider = styled.div`
  width: 1px;
  height: 65px;
  background: #343842;
`;

const Pillars = styled.div`
  display: grid;
  grid-template-columns: 216px 234px 235px auto;
  margin: -2px 0 0 55px;
`;

const Pillar = styled.div`
  display: grid;
  grid-template-columns: ${({ $gap }) => $gap}px auto;
  align-items: center;
  color: #2563f2;
`;

const PillarTitle = styled.div`
  ${tall}
  margin-top: 1px;
  font-size: 15.8px;
  line-height: 20px;
  color: #c9cbd2;
`;

const PillarText = styled.div`
  ${tall}
  margin-top: 5px;
  font-size: 13.8px;
  line-height: 20px;
  color: #989ba6;
`;
